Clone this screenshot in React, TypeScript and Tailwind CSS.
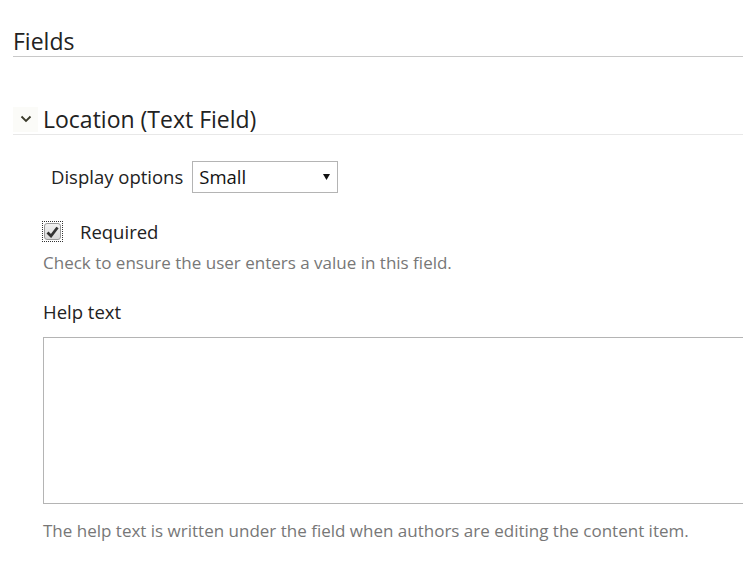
import React from 'react';

function Chevron() {
  return (
    <svg width="12" height="8" viewBox="0 0 12 8" fill="none">
      <path d="M1.5 1.5 L6 6 L10.5 1.5" stroke="#3a3a2a" strokeWidth="1.8" />
    </svg>
  );
}

function FakeCheckbox() {
  return (
    <div className="w-[21px] h-[21px] p-[1px] border border-dotted border-[#333] flex">
      <div className="flex-1 rounded-[3px] border border-[#9a9a9a] bg-gradient-to-b from-[#f2f2f2] to-[#d8d8d8] flex items-center justify-center">
        <svg width="13" height="12" viewBox="0 0 13 12">
          <path d="M1.5 6.5 L5 10 L11.5 1.5" stroke="#333" strokeWidth="2.8" fill="none" />
        </svg>
      </div>
    </div>
  );
}

export default function App() {
  return (
    <div className="min-h-screen w-full overflow-hidden bg-white text-[#333] font-['Open_Sans',sans-serif]">
      {/* Fields header */}
      <div className="pl-[13px] pt-[27px]">
        <h2 className="text-[23px] leading-[29px] text-[#222] border-b border-[#c8c8c8]">Fields</h2>
      </div>

      {/* Field section */}
      <div className="pl-[13px] mt-[49px]">
        <div className="flex items-center border-b border-[#e8e8e8] h-[29px] pb-[2px]">
          <div className="w-[25px] h-[25px] bg-[#fbfbf8] flex items-center justify-center mr-[5px]">
            <Chevron />
          </div>
          <span className="text-[23px] leading-[27px] text-[#222]">Location (Text Field)</span>
        </div>

        <div className="pl-[38px] pt-[26px]">
          <div className="flex items-center">
            <span className="text-[18.5px] text-[#222] mr-[9px]">Display options</span>
            <div className="w-[146px] h-[32px] border border-[#b4b4b4] flex items-center justify-between pl-[6px] pr-[7px]">
              <span className="text-[18.5px] text-[#111]">Small</span>
              <svg width="7" height="6" viewBox="0 0 7 6">
                <path d="M0 0 H7 L3.5 6 Z" fill="#111" />
              </svg>
            </div>
          </div>

          <div className="flex items-center mt-[28px] -ml-[9px]">
            <FakeCheckbox />
            <span className="ml-[17px] text-[18.5px] leading-[21px] text-[#222]">Required</span>
          </div>
          <p className="-ml-[8px] mt-[10px] text-[17px] leading-[22px] text-[#777]">Check to ensure the user enters a value in this field.</p>

          <div className="-ml-[8px] mt-[26px]">
            <label className="block text-[18.5px] leading-[24px] text-[#222]">Help text</label>
            <div className="mt-[13px] w-[760px] h-[167px] border border-[#b4b4b4]" />
            <p className="mt-[16px] text-[17px] leading-[22px] text-[#777]">
              The help text is written under the field when authors are editing the content item.
            </p>
          </div>
        </div>
      </div>
    </div>
  );
}
